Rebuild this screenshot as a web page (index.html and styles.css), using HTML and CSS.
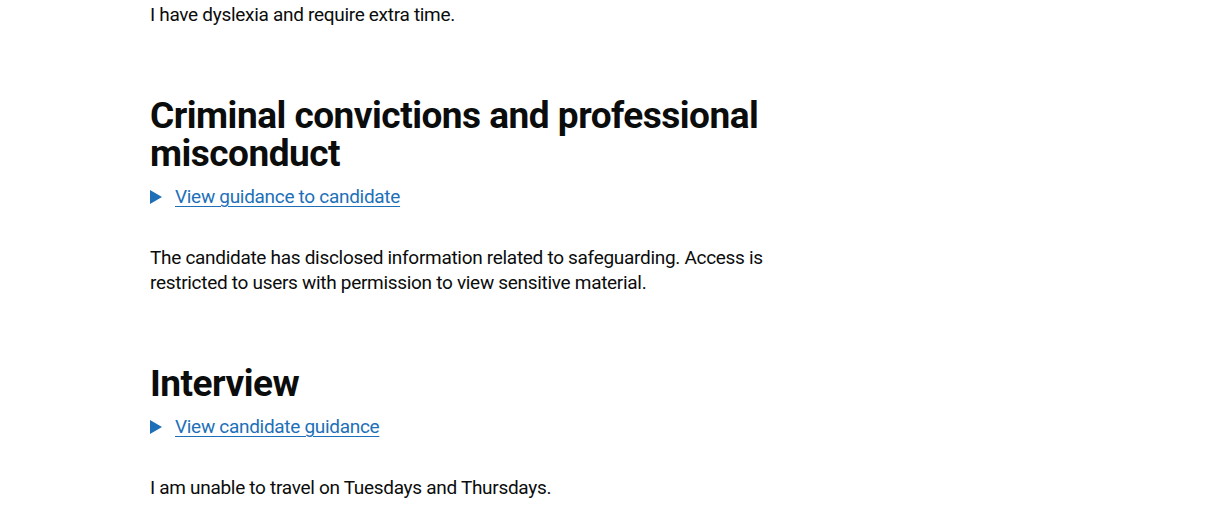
FILE: index.html
```html
<!DOCTYPE html>
<html lang="en">
<head>
<meta charset="utf-8">
<title>Application</title>
<link rel="stylesheet" href="styles.css">
</head>
<body>
<main class="container">
  <div class="column">
    <section class="section">
      <p class="body">I have dyslexia and require extra time.</p>
    </section>
    <section class="section">
      <h2 class="heading">Criminal convictions and professional misconduct</h2>
      <details class="details">
        <summary class="summary"><span class="summary-text">View guidance to candidate</span></summary>
      </details>
      <p class="body">The candidate has disclosed information related to safeguarding. Access is restricted to users with permission to view sensitive material.</p>
    </section>
    <section class="section">
      <h2 class="heading">Interview</h2>
      <details class="details">
        <summary class="summary"><span class="summary-text">View candidate guidance</span></summary>
      </details>
      <p class="body">I am unable to travel on Tuesdays and Thursdays.</p>
    </section>
  </div>
</main>
</body>
</html>
```

FILE: styles.css
```css
html, body {
  margin: 0;
  padding: 0;
  background: #ffffff;
}
body {
  font-family: Roboto, "Noto Sans", Arial, sans-serif;
  color: #0b0c0c;
  -webkit-font-smoothing: antialiased;
}
.container {
  margin: 0 0 0 150px;
  padding-top: 2px;
}
.column {
  width: 630px;
}
.section {
  margin-bottom: 70px;
}
.section:last-child {
  margin-bottom: 0;
}
.body {
  margin: 0;
  font-size: 19px;
  line-height: 25px;
  letter-spacing: -0.3px;
}
.heading {
  margin: 0 0 11px;
  font-size: 37px;
  line-height: 38px;
  font-weight: 700;
  letter-spacing: -0.5px;
}
.details {
  margin: 0 0 36px;
}
.summary {
  display: inline-block;
  position: relative;
  padding-left: 25px;
  font-size: 19px;
  line-height: 25px;
  letter-spacing: -0.3px;
  color: #1d70b8;
  cursor: pointer;
  list-style: none;
}
.summary::-webkit-details-marker {
  display: none;
}
.summary::before {
  content: "";
  position: absolute;
  left: 0;
  top: 6px;
  width: 0;
  height: 0;
  border-style: solid;
  border-width: 7px 0 7px 12.124px;
  border-color: transparent transparent transparent #1d70b8;
}
.summary-text {
  text-decoration: underline;
  text-decoration-thickness: 1px;
  text-underline-offset: 3px;
}
```
